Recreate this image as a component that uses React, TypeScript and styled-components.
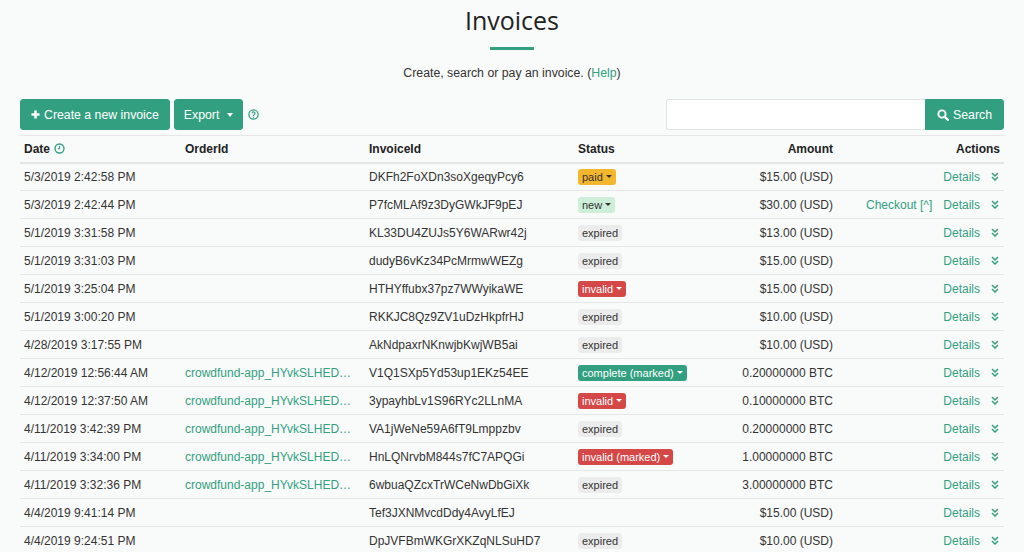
import React from "react";
import styled, { createGlobalStyle } from "styled-components";

const GREEN = "#329f80";

const Global = createGlobalStyle`
  html, body { margin: 0; padding: 0; background: #f9fbfa; }
  body { font-family: "Liberation Sans", Arial, sans-serif; font-size: 12px; color: #333; }
  * { box-sizing: border-box; }
`;

const Page = styled.div`
  padding: 0 20px;
`;

const Header = styled.header`
  display: flex;
  flex-direction: column;
  align-items: center;
  padding-top: 3px;
`;

const Title = styled.h1`
  margin: 0;
  font-family: "Open Sans", "DejaVu Sans", sans-serif;
  font-weight: 400;
  font-size: 25px;
  line-height: 34px;
  color: #222;
`;

const Divider = styled.div`
  width: 44px;
  height: 3px;
  background: ${GREEN};
  margin-top: 10px;
`;

const Lead = styled.p`
  margin: 15px 0 0;
  font-size: 12.3px;
  line-height: 16px;
  color: #333;
`;

const Link = styled.a`
  color: ${GREEN};
  text-decoration: none;
  cursor: pointer;
`;

const Toolbar = styled.div`
  display: flex;
  align-items: center;
  justify-content: space-between;
  margin-top: 18px;
  height: 31px;
`;

const Group = styled.div`
  display: flex;
  align-items: center;
  gap: 4px;
`;

const Button = styled.button<{ $left?: boolean; $pad?: number }>`
  display: inline-flex;
  align-items: center;
  gap: 4px;
  height: 31px;
  padding: 0 ${(p) => p.$pad ?? 10}px;
  background: ${GREEN};
  color: #fff;
  border: 1px solid ${GREEN};
  border-radius: ${(p) => (p.$left ? "0 3px 3px 0" : "3px")};
  font-family: "Liberation Sans", Arial, sans-serif;
  font-size: 12.3px;
  cursor: pointer;
`;

const HelpIcon = styled.span`
  display: inline-flex;
  margin-left: 1px;
`;

const SearchForm = styled.div`
  display: flex;
`;

const SearchInput = styled.input`
  width: 259px;
  height: 31px;
  border: 1px solid #dfe3e1;
  border-right: none;
  border-radius: 3px 0 0 3px;
  background: #fff;
  outline: none;
`;

const Table = styled.table`
  width: 100%;
  margin-top: 5px;
  border-collapse: collapse;
  table-layout: fixed;
`;

const Th = styled.th<{ $w: number; $align?: string }>`
  width: ${(p) => p.$w}px;
  height: 27px;
  padding: 0 4px;
  text-align: ${(p) => p.$align || "left"};
  font-weight: 700;
  font-size: 12px;
  color: #222;
  border-top: 1px solid #e6e8e7;
  border-bottom: 2px solid #e3e6e5;
  vertical-align: middle;
`;

const HeadInner = styled.span`
  display: inline-flex;
  align-items: center;
  gap: 4px;
`;

const Tr = styled.tr`
  border-bottom: 1px solid #e6e6e6;
`;

const Td = styled.td<{ $align?: string }>`
  height: 28px;
  padding: 0 4px;
  text-align: ${(p) => p.$align || "left"};
  white-space: nowrap;
  overflow: hidden;
  vertical-align: middle;
  color: #333;
`;

const OrderLink = styled(Link)`
  display: block;
  max-width: 172px;
  overflow: hidden;
  text-overflow: ellipsis;
  white-space: nowrap;
`;

const BADGE: Record<string, { bg: string; fg: string }> = {
  paid: { bg: "#f3b72e", fg: "#333" },
  new: { bg: "#cdefd9", fg: "#333" },
  expired: { bg: "#ececec", fg: "#333" },
  invalid: { bg: "#d44848", fg: "#fff" },
  complete: { bg: GREEN, fg: "#fff" },
};

const Badge = styled.span<{ $kind: string }>`
  display: inline-flex;
  align-items: center;
  gap: 3px;
  height: 16px;
  padding: 0 4px;
  border-radius: 3px;
  font-size: 11px;
  background: ${(p) => BADGE[p.$kind].bg};
  color: ${(p) => BADGE[p.$kind].fg};
`;

const Caret = styled.span`
  width: 0;
  height: 0;
  border-left: 3px solid transparent;
  border-right: 3px solid transparent;
  border-top: 3px solid currentColor;
`;

const BigCaret = styled(Caret)`
  border-left-width: 3.5px;
  border-right-width: 3.5px;
  border-top-width: 4px;
  margin-left: 4px;
`;

const Actions = styled.div`
  display: flex;
  justify-content: flex-end;
  align-items: center;
  gap: 11px;
`;

const Chevron = styled.span`
  display: inline-flex;
  margin-right: 1px;
`;

const PlusIcon = () => (
  <svg width="9" height="9" viewBox="0 0 10 10">
    <path d="M5 0.5v9M0.5 5h9" stroke="#fff" strokeWidth="2.8" />
  </svg>
);

const SearchIcon = () => (
  <svg width="12" height="12" viewBox="0 0 12 12">
    <circle cx="5" cy="5" r="3.6" fill="none" stroke="#fff" strokeWidth="1.9" />
    <path d="M7.6 7.6L11 11" stroke="#fff" strokeWidth="2.2" strokeLinecap="round" />
  </svg>
);

const QuestionIcon = () => (
  <svg width="11" height="11" viewBox="0 0 12 12">
    <circle cx="6" cy="6" r="5" fill="none" stroke={GREEN} strokeWidth="1.4" />
    <path d="M4.4 4.7a1.6 1.6 0 1 1 2.2 1.5c-.5.2-.6.5-.6 1v.3" fill="none" stroke={GREEN} strokeWidth="1.2" />
    <circle cx="6" cy="9" r="0.7" fill={GREEN} />
  </svg>
);

const ClockIcon = () => (
  <svg width="11" height="11" viewBox="0 0 12 12">
    <circle cx="6" cy="6" r="4.9" fill="none" stroke={GREEN} strokeWidth="1.5" />
    <path d="M6 3.2V6.3H4" fill="none" stroke={GREEN} strokeWidth="1.3" />
  </svg>
);

const DoubleDown = () => (
  <svg width="8" height="9" viewBox="0 0 8 9">
    <path d="M1 1l3 3 3-3M1 5l3 3 3-3" fill="none" stroke={GREEN} strokeWidth="1.5" />
  </svg>
);

type Row = {
  date: string;
  order?: string;
  id: string;
  status?: { kind: string; label: string; menu: boolean };
  amount: string;
  checkout?: boolean;
};

const CF = "crowdfund-app_HYvkSLHED…";
const st = (kind: string, label: string, menu = true) => ({ kind, label, menu });

const rows: Row[] = [
  { date: "5/3/2019 2:42:58 PM", id: "DKFh2FoXDn3soXgeqyPcy6", status: st("paid", "paid"), amount: "$15.00 (USD)" },
  { date: "5/3/2019 2:42:44 PM", id: "P7fcMLAf9z3DyGWkJF9pEJ", status: st("new", "new"), amount: "$30.00 (USD)", checkout: true },
  { date: "5/1/2019 3:31:58 PM", id: "KL33DU4ZUJs5Y6WARwr42j", status: st("expired", "expired", false), amount: "$13.00 (USD)" },
  { date: "5/1/2019 3:31:03 PM", id: "dudyB6vKz34PcMrmwWEZg", status: st("expired", "expired", false), amount: "$15.00 (USD)" },
  { date: "5/1/2019 3:25:04 PM", id: "HTHYffubx37pz7WWyikaWE", status: st("invalid", "invalid"), amount: "$15.00 (USD)" },
  { date: "5/1/2019 3:00:20 PM", id: "RKKJC8Qz9ZV1uDzHkpfrHJ", status: st("expired", "expired", false), amount: "$10.00 (USD)" },
  { date: "4/28/2019 3:17:55 PM", id: "AkNdpaxrNKnwjbKwjWB5ai", status: st("expired", "expired", false), amount: "$10.00 (USD)" },
  { date: "4/12/2019 12:56:44 AM", order: CF, id: "V1Q1SXp5Yd53up1EKz54EE", status: st("complete", "complete (marked)"), amount: "0.20000000 BTC" },
  { date: "4/12/2019 12:37:50 AM", order: CF, id: "3ypayhbLv1S96RYc2LLnMA", status: st("invalid", "invalid"), amount: "0.10000000 BTC" },
  { date: "4/11/2019 3:42:39 PM", order: CF, id: "VA1jWeNe59A6fT9Lmppzbv", status: st("expired", "expired", false), amount: "0.20000000 BTC" },
  { date: "4/11/2019 3:34:00 PM", order: CF, id: "HnLQNrvbM844s7fC7APQGi", status: st("invalid", "invalid (marked)"), amount: "1.00000000 BTC" },
  { date: "4/11/2019 3:32:36 PM", order: CF, id: "6wbuaQZcxTrWCeNwDbGiXk", status: st("expired", "expired", false), amount: "3.00000000 BTC" },
  { date: "4/4/2019 9:41:14 PM", id: "Tef3JXNMvcdDdy4AvyLfEJ", amount: "$15.00 (USD)" },
  { date: "4/4/2019 9:24:51 PM", id: "DpJVFBmWKGrXKZqNLSuHD7", status: st("expired", "expired", false), amount: "$10.00 (USD)" },
];

export default function App() {
  return (
    <>
      <Global />
      <Page>
        <Header>
          <Title>Invoices</Title>
          <Divider />
          <Lead>
            Create, search or pay an invoice. (<Link>Help</Link>)
          </Lead>
        </Header>
        <Toolbar>
          <Group>
            <Button>
              <PlusIcon />
              Create a new invoice
            </Button>
            <Button $pad={9}>
              Export
              <BigCaret />
            </Button>
            <HelpIcon>
              <QuestionIcon />
            </HelpIcon>
          </Group>
          <SearchForm>
            <SearchInput />
            <Button $left $pad={11}>
              <SearchIcon />
              Search
            </Button>
          </SearchForm>
        </Toolbar>
        <Table>
          <thead>
            <tr>
              <Th $w={161}>
                <HeadInner>
                  Date <ClockIcon />
                </HeadInner>
              </Th>
              <Th $w={184}>OrderId</Th>
              <Th $w={209}>InvoiceId</Th>
              <Th $w={130}>Status</Th>
              <Th $w={133} $align="right">Amount</Th>
              <Th $w={167} $align="right">Actions</Th>
            </tr>
          </thead>
          <tbody>
            {rows.map((r) => (
              <Tr key={r.id}>
                <Td>{r.date}</Td>
                <Td>{r.order && <OrderLink>{r.order}</OrderLink>}</Td>
                <Td>{r.id}</Td>
                <Td>
                  {r.status && (
                    <Badge $kind={r.status.kind}>
                      {r.status.label}
                      {r.status.menu && <Caret />}
                    </Badge>
                  )}
                </Td>
                <Td $align="right">{r.amount}</Td>
                <Td $align="right">
                  <Actions>
                    {r.checkout && <Link>Checkout [^]</Link>}
                    <Link>Details</Link>
                    <Chevron>
                      <DoubleDown />
                    </Chevron>
                  </Actions>
                </Td>
              </Tr>
            ))}
          </tbody>
        </Table>
      </Page>
    </>
  );
}
